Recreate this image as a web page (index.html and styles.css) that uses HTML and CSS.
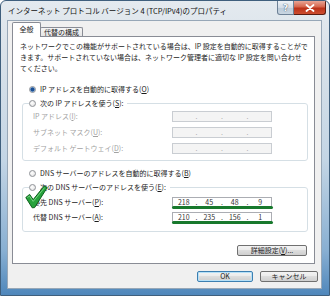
FILE: index.html
```html
<!DOCTYPE html>
<html lang="ja">
  <head>
    <meta charset="UTF-8" />
    <title>インターネット プロトコル バージョン 4 (TCP/IPv4)のプロパティ</title>
    <link rel="stylesheet" href="styles.css">
  </head>
  <body>
    <div class="window">
      <div class="titlebar">
        <span class="title">インターネット プロトコル バージョン 4 (TCP/IPv4)のプロパティ</span>
        <div class="caption-buttons">
          <span class="cap-btn help">?</span>
          <span class="cap-btn close">
            <svg width="10" height="8" viewBox="0 0 10 8">
              <path d="M1.5 1 L8.5 7 M8.5 1 L1.5 7" stroke="#fff" stroke-width="1.8" stroke-linecap="round" />
            </svg>
          </span>
        </div>
      </div>

      <div class="client">
        <div class="tabs">
          <div class="tab active">全般</div>
          <div class="tab">代替の構成</div>
        </div>

        <div class="panel">
          <p class="intro">
            ネットワークでこの機能がサポートされている場合は、IP 設定を自動的に取得することがで<br />
            きます。サポートされていない場合は、ネットワーク管理者に適切な IP 設定を問い合わせ<br />
            てください。
          </p>

          <div class="radio-row first">
            <span class="radio checked"></span>
            <span>IP アドレスを自動的に取得する(<u>O</u>)</span>
          </div>

          <fieldset class="group ip-group">
            <legend>
              <span class="radio"></span>
              <span>次の IP アドレスを使う(<u>S</u>):</span>
            </legend>
            <div class="field disabled">
              <span>IP アドレス(<u>I</u>):</span>
              <div class="ip-box"><i></i><b>.</b><i></i><b>.</b><i></i><b>.</b><i></i></div>
            </div>
            <div class="field disabled">
              <span>サブネット マスク(<u>U</u>):</span>
              <div class="ip-box"><i></i><b>.</b><i></i><b>.</b><i></i><b>.</b><i></i></div>
            </div>
            <div class="field disabled">
              <span>デフォルト ゲートウェイ(<u>D</u>):</span>
              <div class="ip-box"><i></i><b>.</b><i></i><b>.</b><i></i><b>.</b><i></i></div>
            </div>
          </fieldset>

          <div class="radio-row second">
            <span class="radio"></span>
            <span>DNS サーバーのアドレスを自動的に取得する(<u>B</u>)</span>
          </div>

          <fieldset class="group dns-group">
            <legend>
              <span class="radio marked">
                <svg class="check" width="23" height="24" viewBox="0 0 23 24">
                  <path d="M0.8 12.5 L4.6 9.4 L8.2 14.6 L19.2 1 L22.2 2.6 L9.6 22.6 L7.2 22.8 Z"
                        fill="#27a23c" stroke="#0b5f1c" stroke-width="1" stroke-linejoin="round" />
                  <path d="M2.4 12.6 L4.4 11 L8.2 16.4 L19.6 2.6" fill="none" stroke="#7fd88a" stroke-width="0.9" />
                </svg>
              </span>
              <span>次の DNS サーバーのアドレスを使う(<u>E</u>):</span>
            </legend>
            <div class="field">
              <span>優先 DNS サーバー(<u>P</u>):</span>
              <div class="ip-box dns"><i>218</i><b>.</b><i>45</i><b>.</b><i>48</i><b>.</b><i>9</i></div>
            </div>
            <div class="field">
              <span>代替 DNS サーバー(<u>A</u>):</span>
              <div class="ip-box dns"><i>210</i><b>.</b><i>235</i><b>.</b><i>156</i><b>.</b><i>1</i></div>
            </div>
          </fieldset>

          <button class="btn advanced">詳細設定(<u>V</u>)...</button>
        </div>

        <div class="dialog-actions">
          <button class="btn ok">OK</button>
          <button class="btn cancel">キャンセル</button>
        </div>
      </div>
    </div>
  </body>
</html>
```

FILE: styles.css
```css
* {
  box-sizing: border-box;
}

body {
  margin: 0;
  font-family: "Noto Sans CJK JP", "Noto Sans", sans-serif;
  font-size: 7px;
  color: #1b1b1b;
}

u {
  text-decoration-thickness: 1px;
  text-underline-offset: 1px;
}

.window {
  width: 330px;
  height: 296px;
  display: flex;
  flex-direction: column;
  border: 1px solid #3f5f7d;
  border-radius: 6px 6px 0 0;
  background: linear-gradient(
    to bottom,
    #e4eaef 0px,
    #d8e1e9 60px,
    #c3d5e5 160px,
    #88afd2 250px,
    #4c85ba 296px
  );
  overflow: hidden;
}

.titlebar {
  height: 19px;
  display: flex;
  align-items: flex-start;
  padding-left: 7px;
}

.title {
  font-size: 7.5px;
  line-height: 12px;
  padding-top: 4px;
  color: #111;
  white-space: nowrap;
}

.caption-buttons {
  margin-left: auto;
  margin-right: 3px;
  display: flex;
  height: 14px;
}

.cap-btn {
  height: 14px;
  display: flex;
  align-items: center;
  justify-content: center;
}

.help {
  width: 17px;
  border: 1px solid #6d8196;
  border-top: none;
  border-radius: 0 0 0 3px;
  background: linear-gradient(#eef2f6, #d3dde7 50%, #bccbd9 55%, #c9d6e2);
  color: #f7f9fb;
  font-family: "DejaVu Sans", sans-serif;
  font-size: 9px;
  font-weight: bold;
  text-shadow: 0 0 1px #4b6176, 0 0 1px #4b6176;
}

.close {
  width: 32px;
  border: 1px solid #5a1b10;
  border-top: none;
  border-left: none;
  border-radius: 0 0 3px 0;
  background: linear-gradient(#e8a595, #d6654c 45%, #bb3219 55%, #cc4d30);
}

.client {
  flex: 1;
  margin: 0 7px 6px 6px;
  border: 1px solid #97a7b7;
  background: #f0f0f0;
  display: flex;
  flex-direction: column;
}

.tabs {
  display: flex;
  align-items: flex-end;
  height: 14px;
  margin: 2px 0 -1px 4px;
}

.tab {
  height: 10px;
  width: 43px;
  margin-left: -1px;
  border: 1px solid #898c95;
  border-bottom: none;
  border-radius: 2px 2px 0 0;
  background: linear-gradient(#f6f6f6, #e3e3e3);
  text-align: center;
  line-height: 9px;
}

.tab.active {
  position: relative;
  z-index: 1;
  height: 15px;
  width: 29px;
  margin-left: 0;
  background: #fff;
  line-height: 13px;
}

.panel {
  width: 303px;
  height: 228px;
  margin-left: 4px;
  border: 1px solid #898c95;
  background: #fff;
  display: flex;
  flex-direction: column;
}

.intro {
  margin: 0;
  padding: 4px 0 0 7px;
  line-height: 11px;
  white-space: nowrap;
}

.radio-row {
  display: flex;
  align-items: center;
  gap: 4px;
  line-height: 11px;
  padding-left: 16px;
}

.radio-row.first {
  margin-top: 10px;
}

.radio-row.second {
  margin-top: 7px;
}

.radio {
  position: relative;
  width: 7px;
  height: 7px;
  flex: none;
  border: 1px solid #8f9297;
  border-radius: 50%;
  background: radial-gradient(circle at 40% 40%, #ffffff, #dcdcdc);
}

.radio.checked {
  background: radial-gradient(circle, #1b4f93 0 1.6px, #6e9fd6 2.2px, #e9eef4 2.6px);
}

.check {
  position: absolute;
  left: -5px;
  top: 0;
}

.group {
  margin: 3px 6px 0 9px;
  border: 1px solid #d5dfe5;
  border-radius: 3px;
  padding: 2px 0 6px 10px;
  display: flex;
  flex-direction: column;
  gap: 5px;
}

.group legend {
  display: flex;
  align-items: center;
  gap: 4px;
  line-height: 11px;
  margin-left: -4px;
  padding: 0 4px 0 0;
}

.dns-group {
  padding-top: 4px;
  padding-bottom: 8px;
  gap: 4px;
}

.field {
  display: grid;
  grid-template-columns: 139px 100px;
  align-items: center;
  line-height: 11px;
}

.field.disabled span {
  color: #a2a2a2;
}

.ip-box {
  height: 11px;
  display: grid;
  grid-template-columns: 1fr 4px 1fr 4px 1fr 4px 1fr;
  align-items: center;
  border: 1px solid #c9cdd2;
  background: #f4f4f4;
  color: #a8a8a8;
  line-height: 9px;
}

.ip-box i,
.ip-box b {
  font-style: normal;
  font-weight: normal;
  text-align: center;
}

.ip-box.dns {
  position: relative;
  background: #fff;
  border-color: #abadb3;
  color: #333;
}

.ip-box.dns::after {
  content: "";
  position: absolute;
  left: -1px;
  right: -2px;
  bottom: -2px;
  height: 3px;
  border-radius: 2px;
  background: #18792d;
}

.btn {
  height: 11px;
  padding: 0;
  border: 1px solid #707070;
  border-radius: 2px;
  background: linear-gradient(#f3f3f3 0, #ebebeb 45%, #dddddd 50%, #cfcfcf 100%);
  font-family: inherit;
  font-size: 7px;
  line-height: 9px;
  color: #1b1b1b;
}

.advanced {
  width: 70px;
  margin: 13px 7px 0 auto;
}

.dialog-actions {
  display: flex;
  justify-content: flex-end;
  gap: 7px;
  margin: 7px 3px 0 0;
}

.ok {
  width: 56px;
  border-color: #3c7fb1;
  box-shadow: inset 0 0 0 1px #b6e0f7;
}

.cancel {
  width: 58px;
}
```
